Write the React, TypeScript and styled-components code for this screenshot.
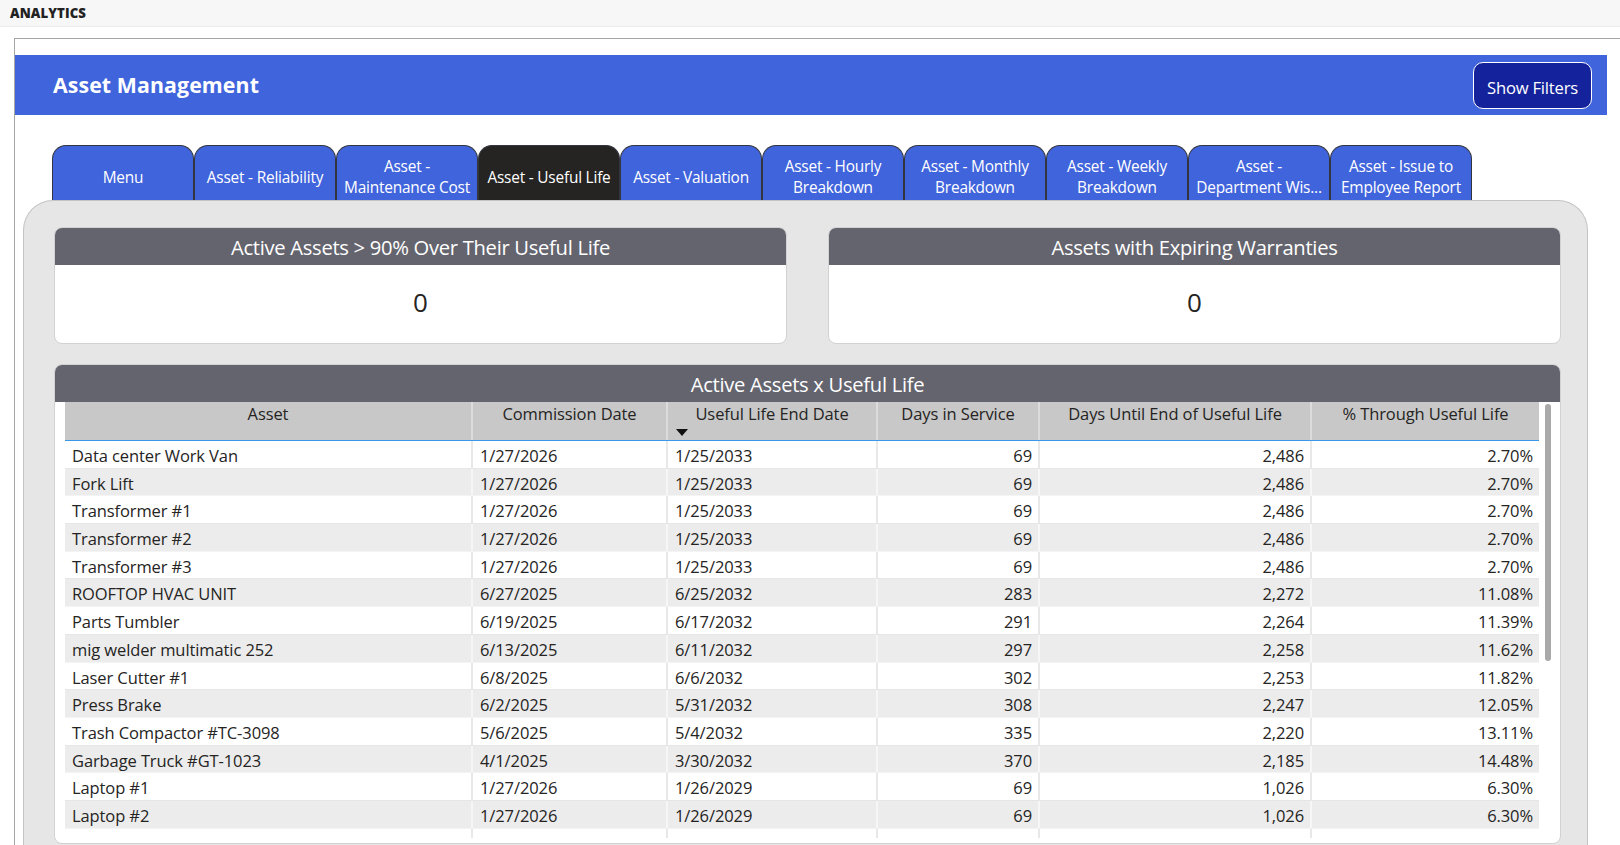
import React from "react";
import styled, { createGlobalStyle } from "styled-components";

const Global = createGlobalStyle`
  html, body { margin: 0; padding: 0; background: #ffffff; overflow: hidden; }
  body { font-family: "Open Sans", "Noto Sans", sans-serif; width: 1620px; height: 845px; }
  * { box-sizing: border-box; }
`;

const TopBar = styled.div`
  height: 27px;
  background: #f7f7f7;
  border-bottom: 1px solid #ececec;
  display: flex;
  align-items: center;
  padding-left: 10px;
  font-size: 13.2px;
  font-weight: 800;
  color: #222222;
  letter-spacing: 0.1px;
`;

const Frame = styled.div`
  margin: 11px 0 0 14px;
  border-top: 1px solid #a6a6a6;
  border-left: 1px solid #a6a6a6;
  height: 900px;
  padding-top: 16px;
`;

const Header = styled.div`
  width: 1592px;
  height: 60px;
  background: #4064dc;
  display: flex;
  align-items: center;
  justify-content: space-between;
  padding: 0 15px 2px 38px;
`;

const Title = styled.h1`
  margin: 0;
  color: #ffffff;
  font-size: 21.3px;
  font-weight: 700;
  letter-spacing: 0.1px;
`;

const FilterButton = styled.button`
  height: 47px;
  width: 119px;
  border-radius: 10px;
  border: 1.5px solid #ffffff;
  background: #14239c;
  color: #ffffff;
  font-family: "Open Sans", "Noto Sans", sans-serif;
  font-size: 16.6px;
  padding: 4px 0 0;
  margin-top: 2px;
  letter-spacing: -0.2px;
`;

const Tabs = styled.div`
  display: flex;
  margin-top: 30px;
  padding-left: 37px;
  height: 55px;
  align-items: stretch;
`;

const Tab = styled.div<{ $active?: boolean }>`
  width: 142px;
  background: ${(p) => (p.$active ? "#252423" : "#4064dc")};
  border: 1px solid #34363f;
  border-bottom: none;
  border-radius: 14px 14px 0 0;
  color: #ffffff;
  font-size: 15.4px;
  line-height: 21px;
  display: flex;
  flex-direction: column;
  align-items: center;
  justify-content: center;
  text-align: center;
  padding-top: 8px;
  white-space: nowrap;
  letter-spacing: -0.2px;
`;

const Panel = styled.div`
  margin-left: 8px;
  width: 1565px;
  height: 700px;
  background: #e6e6e6;
  border: 1px solid #c4c4c4;
  border-bottom: none;
  border-radius: 30px 30px 0 0;
  padding: 26px 26px 0 30px;
`;

const KpiRow = styled.div`
  display: grid;
  grid-template-columns: 733px 733px;
  column-gap: 41px;
`;

const Card = styled.div`
  background: #ffffff;
  border: 1px solid #d2d2d2;
  border-radius: 8px;
  overflow: hidden;
`;

const KpiCard = styled(Card)`
  height: 117px;
  display: flex;
  flex-direction: column;
`;

const CardHead = styled.div`
  height: 37px;
  flex: none;
  background: #64646e;
  color: #ffffff;
  font-size: 20.2px;
  display: flex;
  align-items: center;
  justify-content: center;
  letter-spacing: -0.3px;
`;

const KpiValue = styled.div`
  flex: 1;
  display: flex;
  align-items: center;
  justify-content: center;
  font-size: 26px;
  color: #252423;
  padding-bottom: 4px;
`;

const TableCard = styled(Card)`
  margin-top: 20px;
  padding-bottom: 5px;
`;

const TableWrap = styled.div`
  display: flex;
  padding: 0 9px 0 10px;
  gap: 6px;
`;

const Table = styled.div`
  width: 1474px;
`;

const Track = styled.div`
  width: 6px;
  padding-top: 2px;
`;

const Thumb = styled.div`
  height: 257px;
  background: #a9a9a9;
  border-radius: 3px;
`;

const COLS = "408px 195px 210px 162px 272px 227px";

const HeadRow = styled.div`
  display: grid;
  grid-template-columns: ${COLS};
  height: 39px;
  background: #c8c8c8;
  border-bottom: 1px solid #3a96e8;
`;

const HeadCell = styled.div<{ $last?: boolean }>`
  display: flex;
  flex-direction: column;
  align-items: stretch;
  border-right: ${(p) => (p.$last ? "none" : "2px solid #dcdcdc")};
  font-size: 16.5px;
  line-height: 22px;
  color: #252423;
  padding-top: 1px;
  letter-spacing: -0.1px;
`;

const HeadLabel = styled.span`
  text-align: center;
`;

const SortArrow = styled.svg`
  margin: 4px 0 0 8px;
  display: block;
`;

const Body = styled.div`
  height: 397px;
  overflow: hidden;
`;

const Row = styled.div<{ $alt: boolean }>`
  display: grid;
  grid-template-columns: ${COLS};
  height: 27.7px;
  background: ${(p) => (p.$alt ? "#ececec" : "#ffffff")};
  border-bottom: 1px solid ${(p) => (p.$alt ? "#f4f4f4" : "#e6e6e6")};
`;

const Cell = styled.div<{ $right?: boolean; $alt: boolean; $last?: boolean }>`
  font-size: 16.5px;
  color: #252423;
  line-height: 25px;
  padding: 2px 6px 0 7px;
  text-align: ${(p) => (p.$right ? "right" : "left")};
  border-right: ${(p) => (p.$last ? "none" : `2px solid ${p.$alt ? "#f6f6f6" : "#e8e8e8"}`)};
  white-space: nowrap;
  overflow: hidden;
  letter-spacing: -0.1px;
`;

type R = [string, string, string, string, string, string];

const rows: R[] = [
  ["Data center Work Van", "1/27/2026", "1/25/2033", "69", "2,486", "2.70%"],
  ["Fork Lift", "1/27/2026", "1/25/2033", "69", "2,486", "2.70%"],
  ["Transformer #1", "1/27/2026", "1/25/2033", "69", "2,486", "2.70%"],
  ["Transformer #2", "1/27/2026", "1/25/2033", "69", "2,486", "2.70%"],
  ["Transformer #3", "1/27/2026", "1/25/2033", "69", "2,486", "2.70%"],
  ["ROOFTOP HVAC UNIT", "6/27/2025", "6/25/2032", "283", "2,272", "11.08%"],
  ["Parts Tumbler", "6/19/2025", "6/17/2032", "291", "2,264", "11.39%"],
  ["mig welder multimatic 252", "6/13/2025", "6/11/2032", "297", "2,258", "11.62%"],
  ["Laser Cutter #1", "6/8/2025", "6/6/2032", "302", "2,253", "11.82%"],
  ["Press Brake", "6/2/2025", "5/31/2032", "308", "2,247", "12.05%"],
  ["Trash Compactor #TC-3098", "5/6/2025", "5/4/2032", "335", "2,220", "13.11%"],
  ["Garbage Truck #GT-1023", "4/1/2025", "3/30/2032", "370", "2,185", "14.48%"],
  ["Laptop #1", "1/27/2026", "1/26/2029", "69", "1,026", "6.30%"],
  ["Laptop #2", "1/27/2026", "1/26/2029", "69", "1,026", "6.30%"],
  ["Laptop #3", "1/27/2026", "1/26/2029", "69", "1,026", "6.30%"],
  ["Laptop #4", "1/27/2026", "1/26/2029", "69", "1,026", "6.30%"],
];

const tabs: { lines: string[]; active?: boolean }[] = [
  { lines: ["Menu"] },
  { lines: ["Asset - Reliability"] },
  { lines: ["Asset -", "Maintenance Cost"] },
  { lines: ["Asset - Useful Life"], active: true },
  { lines: ["Asset - Valuation"] },
  { lines: ["Asset - Hourly", "Breakdown"] },
  { lines: ["Asset - Monthly", "Breakdown"] },
  { lines: ["Asset - Weekly", "Breakdown"] },
  { lines: ["Asset -", "Department Wis..."] },
  { lines: ["Asset - Issue to", "Employee Report"] },
];

const headers = [
  "Asset",
  "Commission Date",
  "Useful Life End Date",
  "Days in Service",
  "Days Until End of Useful Life",
  "% Through Useful Life",
];

export default function App() {
  return (
    <>
      <Global />
      <TopBar>ANALYTICS</TopBar>
      <Frame>
        <Header>
          <Title>Asset Management</Title>
          <FilterButton>Show Filters</FilterButton>
        </Header>
        <Tabs>
          {tabs.map((t, i) => (
            <Tab key={i} $active={t.active}>
              {t.lines.map((l, j) => (
                <span key={j}>{l}</span>
              ))}
            </Tab>
          ))}
        </Tabs>
        <Panel>
          <KpiRow>
            <KpiCard>
              <CardHead>Active Assets &gt; 90% Over Their Useful Life</CardHead>
              <KpiValue>0</KpiValue>
            </KpiCard>
            <KpiCard>
              <CardHead>Assets with Expiring Warranties</CardHead>
              <KpiValue>0</KpiValue>
            </KpiCard>
          </KpiRow>
          <TableCard>
            <CardHead>Active Assets x Useful Life</CardHead>
            <TableWrap>
              <Table>
                <HeadRow>
                  {headers.map((h, i) => (
                    <HeadCell key={h} $last={i === headers.length - 1}>
                      <HeadLabel>{h}</HeadLabel>
                      {i === 2 && (
                        <SortArrow width="12" height="7" viewBox="0 0 12 7">
                          <path d="M0 0 L12 0 L6 7 Z" fill="#111111" />
                        </SortArrow>
                      )}
                    </HeadCell>
                  ))}
                </HeadRow>
                <Body>
                  {rows.map((r, i) => {
                    const alt = i % 2 === 1;
                    return (
                      <Row key={i} $alt={alt}>
                        {r.map((c, j) => (
                          <Cell key={j} $alt={alt} $right={j >= 3} $last={j === 5}>
                            {c}
                          </Cell>
                        ))}
                      </Row>
                    );
                  })}
                </Body>
              </Table>
              <Track>
                <Thumb />
              </Track>
            </TableWrap>
          </TableCard>
        </Panel>
      </Frame>
    </>
  );
}
